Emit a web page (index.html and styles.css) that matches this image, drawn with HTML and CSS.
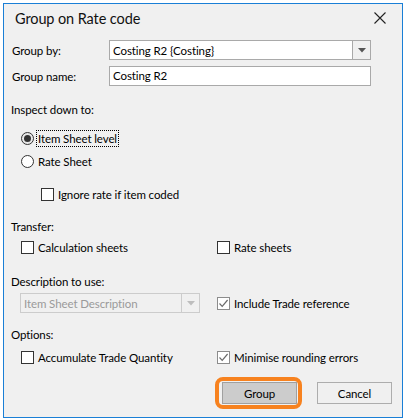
FILE: index.html
```html
<!DOCTYPE html>
<html>
<head>
<meta charset="utf-8">
<link rel="stylesheet" href="styles.css">
</head>
<body>
<div class="screen">
  <div class="dialog">
    <div class="titlebar">
      <span class="title">Group on Rate code</span>
      <svg class="close" width="12" height="12" viewBox="0 0 12 12"><path d="M0.5 0.5 L11.5 11.5 M11.5 0.5 L0.5 11.5" stroke="#222" stroke-width="1.1" fill="none"/></svg>
    </div>
    <div class="form">
      <div class="field r-groupby">
        <span class="flabel">Group by:</span>
        <div class="combo">
          <span class="ctext">Costing R2 {Costing}</span>
          <span class="cbtn"><svg width="8" height="5" viewBox="0 0 8 5"><path d="M0 0 H8 L4 4.5 Z" fill="#555"/></svg></span>
        </div>
      </div>
      <div class="field r-groupname">
        <span class="flabel">Group name:</span>
        <div class="input">Costing R2</div>
      </div>

      <div class="section r-inspect">Inspect down to:</div>
      <div class="opt r-radio1">
        <svg class="radio" width="13" height="13" viewBox="0 0 13 13"><circle cx="6.5" cy="6.5" r="6" fill="#e8e8e8" stroke="#333"/><circle cx="6.5" cy="6.5" r="3.5" fill="#333"/></svg>
        <span class="otext focus">Item Sheet level</span>
      </div>
      <div class="opt r-radio2">
        <svg class="radio" width="13" height="13" viewBox="0 0 13 13"><circle cx="6.5" cy="6.5" r="6" fill="#fff" stroke="#333"/></svg>
        <span class="otext">Rate Sheet</span>
      </div>
      <div class="opt indent r-ignore">
        <span class="box"></span>
        <span class="otext">Ignore rate if item coded</span>
      </div>

      <div class="section r-transfer">Transfer:</div>
      <div class="pair r-calc">
        <div class="opt col1"><span class="box"></span><span class="otext">Calculation sheets</span></div>
        <div class="opt"><span class="box"></span><span class="otext">Rate sheets</span></div>
      </div>

      <div class="section r-desc">Description to use:</div>
      <div class="pair r-desccombo">
        <div class="col1 dcol">
          <div class="combo disabled">
            <span class="ctext">Item Sheet Description</span>
            <span class="cbtn"><svg width="8" height="5" viewBox="0 0 8 5"><path d="M0 0 H8 L4 4.5 Z" fill="#bdbdbd"/></svg></span>
          </div>
        </div>
        <div class="opt"><span class="box checked"><svg width="11" height="11" viewBox="0 0 11 11"><path d="M1.5 5.5 L4.2 8.3 L9.6 2" stroke="#6a6a6a" stroke-width="1.2" fill="none"/></svg></span><span class="otext">Include Trade reference</span></div>
      </div>

      <div class="section r-options">Options:</div>
      <div class="pair r-accum">
        <div class="opt col1"><span class="box"></span><span class="otext">Accumulate Trade Quantity</span></div>
        <div class="opt"><span class="box checked"><svg width="11" height="11" viewBox="0 0 11 11"><path d="M1.5 5.5 L4.2 8.3 L9.6 2" stroke="#6a6a6a" stroke-width="1.2" fill="none"/></svg></span><span class="otext">Minimise rounding errors</span></div>
      </div>

      <div class="buttons">
        <span class="ring"><span class="btn default">Group</span></span>
        <span class="btn">Cancel</span>
      </div>
    </div>
  </div>
</div>
</body>
</html>
```

FILE: styles.css
```css
html, body {
  margin: 0;
  padding: 0;
  background: #ffffff;
}
body {
  font-family: Lato, "Noto Sans", sans-serif;
  font-size: 11.5px;
  letter-spacing: -0.1px;
  color: #000;
}
.screen {
  width: 405px;
  height: 420px;
  box-sizing: border-box;
  padding: 3px 2px 2px 3px;
  border-left: 1px solid #d0d0d0;
  margin-left: -1px;
}
.dialog {
  width: 400px;
  height: 415px;
  box-sizing: border-box;
  border: 1px solid #1a7fd6;
  background: #f0f0f0;
  display: flex;
  flex-direction: column;
}
.titlebar {
  height: 28px;
  display: flex;
  align-items: center;
  justify-content: space-between;
  padding: 0 16px 0 11px;
}
.title {
  font-size: 14.5px;
  color: #111;
}
.form {
  display: flex;
  flex-direction: column;
  padding: 8px 10px 0 7px;
}
.field {
  display: flex;
  align-items: center;
  height: 20px;
}
.flabel {
  width: 97px;
  padding-left: 1px;
}
.combo {
  width: 262px;
  height: 20px;
  box-sizing: border-box;
  border: 1px solid #a9a9a9;
  background: #fff;
  display: flex;
  align-items: center;
}
.ctext {
  flex: 1;
  padding-left: 3px;
  white-space: nowrap;
}
.cbtn {
  width: 17px;
  height: 100%;
  border-left: 1px solid #a9a9a9;
  background: #f0f0f0;
  display: flex;
  align-items: center;
  justify-content: center;
}
.input {
  width: 262px;
  height: 20px;
  box-sizing: border-box;
  border: 1px solid #a9a9a9;
  background: #fff;
  padding-left: 3px;
  line-height: 18px;
}
.r-groupname { margin-top: 6px; }
.section {
  height: 16px;
  line-height: 16px;
}
.opt {
  display: flex;
  align-items: center;
  height: 20px;
  padding-left: 10px;
}
.opt .radio, .opt .box { flex: none; }
.otext {
  margin-left: 4px;
  white-space: nowrap;
  line-height: 15px;
}
.focus {
  outline: 1px dotted #000;
  outline-offset: 0;
  padding: 0 1px;
  margin-left: 3px;
}
.indent { padding-left: 30px; }
.box {
  width: 13px;
  height: 13px;
  box-sizing: border-box;
  border: 1px solid #333;
  background: #fff;
  display: flex;
  align-items: center;
  justify-content: center;
}
.box.checked {
  border-color: #8c8c8c;
}
.pair {
  display: flex;
  align-items: center;
  height: 20px;
}
.col1 { width: 196px; box-sizing: border-box; }
.dcol { padding-left: 9px; }
.combo.disabled {
  width: 180px;
  border-color: #cccccc;
  background: #f0f0f0;
  color: #9a9a9a;
}
.combo.disabled .cbtn { border-left-color: #cccccc; }
.r-inspect { margin-top: 16px; }
.r-radio1 { margin-top: 10px; }
.r-radio2 { margin-top: 3px; }
.r-ignore { margin-top: 13px; }
.r-transfer { margin-top: 15px; }
.r-calc { margin-top: 2px; }
.r-desc { margin-top: 17px; }
.r-desccombo { margin-top: 3px; }
.r-options { margin-top: 14px; }
.r-accum { margin-top: 4px; }
.buttons {
  margin-top: 15px;
  height: 22px;
  display: flex;
  align-items: center;
  justify-content: flex-end;
  gap: 15px;
}
.btn {
  width: 75px;
  height: 22px;
  box-sizing: border-box;
  border: 1px solid #adadad;
  background: #f0f0f0;
  display: flex;
  align-items: center;
  justify-content: center;
}
.btn.default {
  background: #cccccc;
  border-color: #a0a0a0;
}
.ring {
  display: flex;
  align-items: center;
  border: 4px solid #f7821f;
  border-radius: 8px;
  padding: 1px 1px 1px 3px;
}
```
